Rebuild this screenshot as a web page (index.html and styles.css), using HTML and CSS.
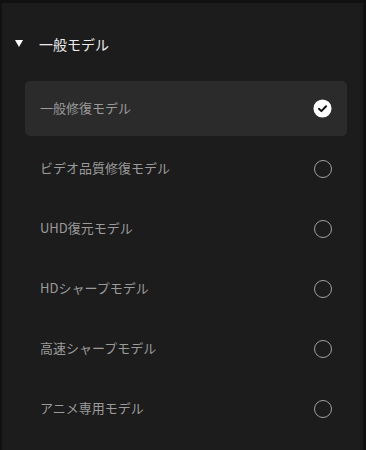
FILE: index.html
```html
<!DOCTYPE html>
<html lang="ja">
<head>
<meta charset="utf-8">
<link rel="stylesheet" href="styles.css">
</head>
<body>
<div class="panel">
  <div class="header">
    <span class="caret"></span>
    <span class="title">一般モデル</span>
  </div>
  <ul class="list">
    <li class="row selected"><span class="label">一般修復モデル</span><span class="check"><svg viewBox="0 0 20 20" width="19" height="19"><circle cx="10" cy="10" r="9.5" fill="#fff"/><path d="M6.2 10.3 L8.8 12.8 L13.8 7.6" fill="none" stroke="#111" stroke-width="2" stroke-linecap="round" stroke-linejoin="round"/></svg></span></li>
    <li class="row"><span class="label">ビデオ品質修復モデル</span><span class="radio"></span></li>
    <li class="row"><span class="label">UHD復元モデル</span><span class="radio"></span></li>
    <li class="row"><span class="label">HDシャープモデル</span><span class="radio"></span></li>
    <li class="row"><span class="label">高速シャープモデル</span><span class="radio"></span></li>
    <li class="row"><span class="label">アニメ専用モデル</span><span class="radio"></span></li>
  </ul>
</div>
</body>
</html>
```
FILE: styles.css
```css
html, body {
  margin: 0;
  padding: 0;
  background: #1c1c1c;
}
body {
  font-family: "Noto Sans CJK JP", "Noto Sans", sans-serif;
}
.panel {
  box-sizing: border-box;
  width: 366px;
  height: 450px;
  border-top: 3px solid #111;
  border-left: 2px solid #111;
  border-right: 3px solid #111;
  background: #1c1c1c;
}
.header {
  display: flex;
  align-items: center;
  height: 84px;
  padding-left: 13px;
  box-sizing: border-box;
}
.caret {
  width: 0;
  height: 0;
  border-left: 4.5px solid transparent;
  border-right: 4.5px solid transparent;
  border-top: 7px solid #fff;
  margin-right: 16px;
  margin-top: -4px;
}
.title {
  color: #ececec;
  font-size: 14px;
  margin-top: -3px;
}
.list {
  list-style: none;
  margin: -6px 16px 0 23px;
  padding: 0;
  display: flex;
  flex-direction: column;
  gap: 5px;
}
.row {
  display: flex;
  align-items: center;
  justify-content: space-between;
  height: 55px;
  padding: 0 15px;
  border-radius: 5px;
  box-sizing: border-box;
}
.row.selected {
  background: #2b2b2b;
}
.label {
  color: #9b9b9b;
  font-size: 13px;
  margin-top: -2px;
}
.radio {
  width: 16px;
  height: 16px;
  border: 1.5px solid #a0a0a0;
  border-radius: 50%;
}
.check {
  display: flex;
  width: 19px;
  height: 19px;
}
```
